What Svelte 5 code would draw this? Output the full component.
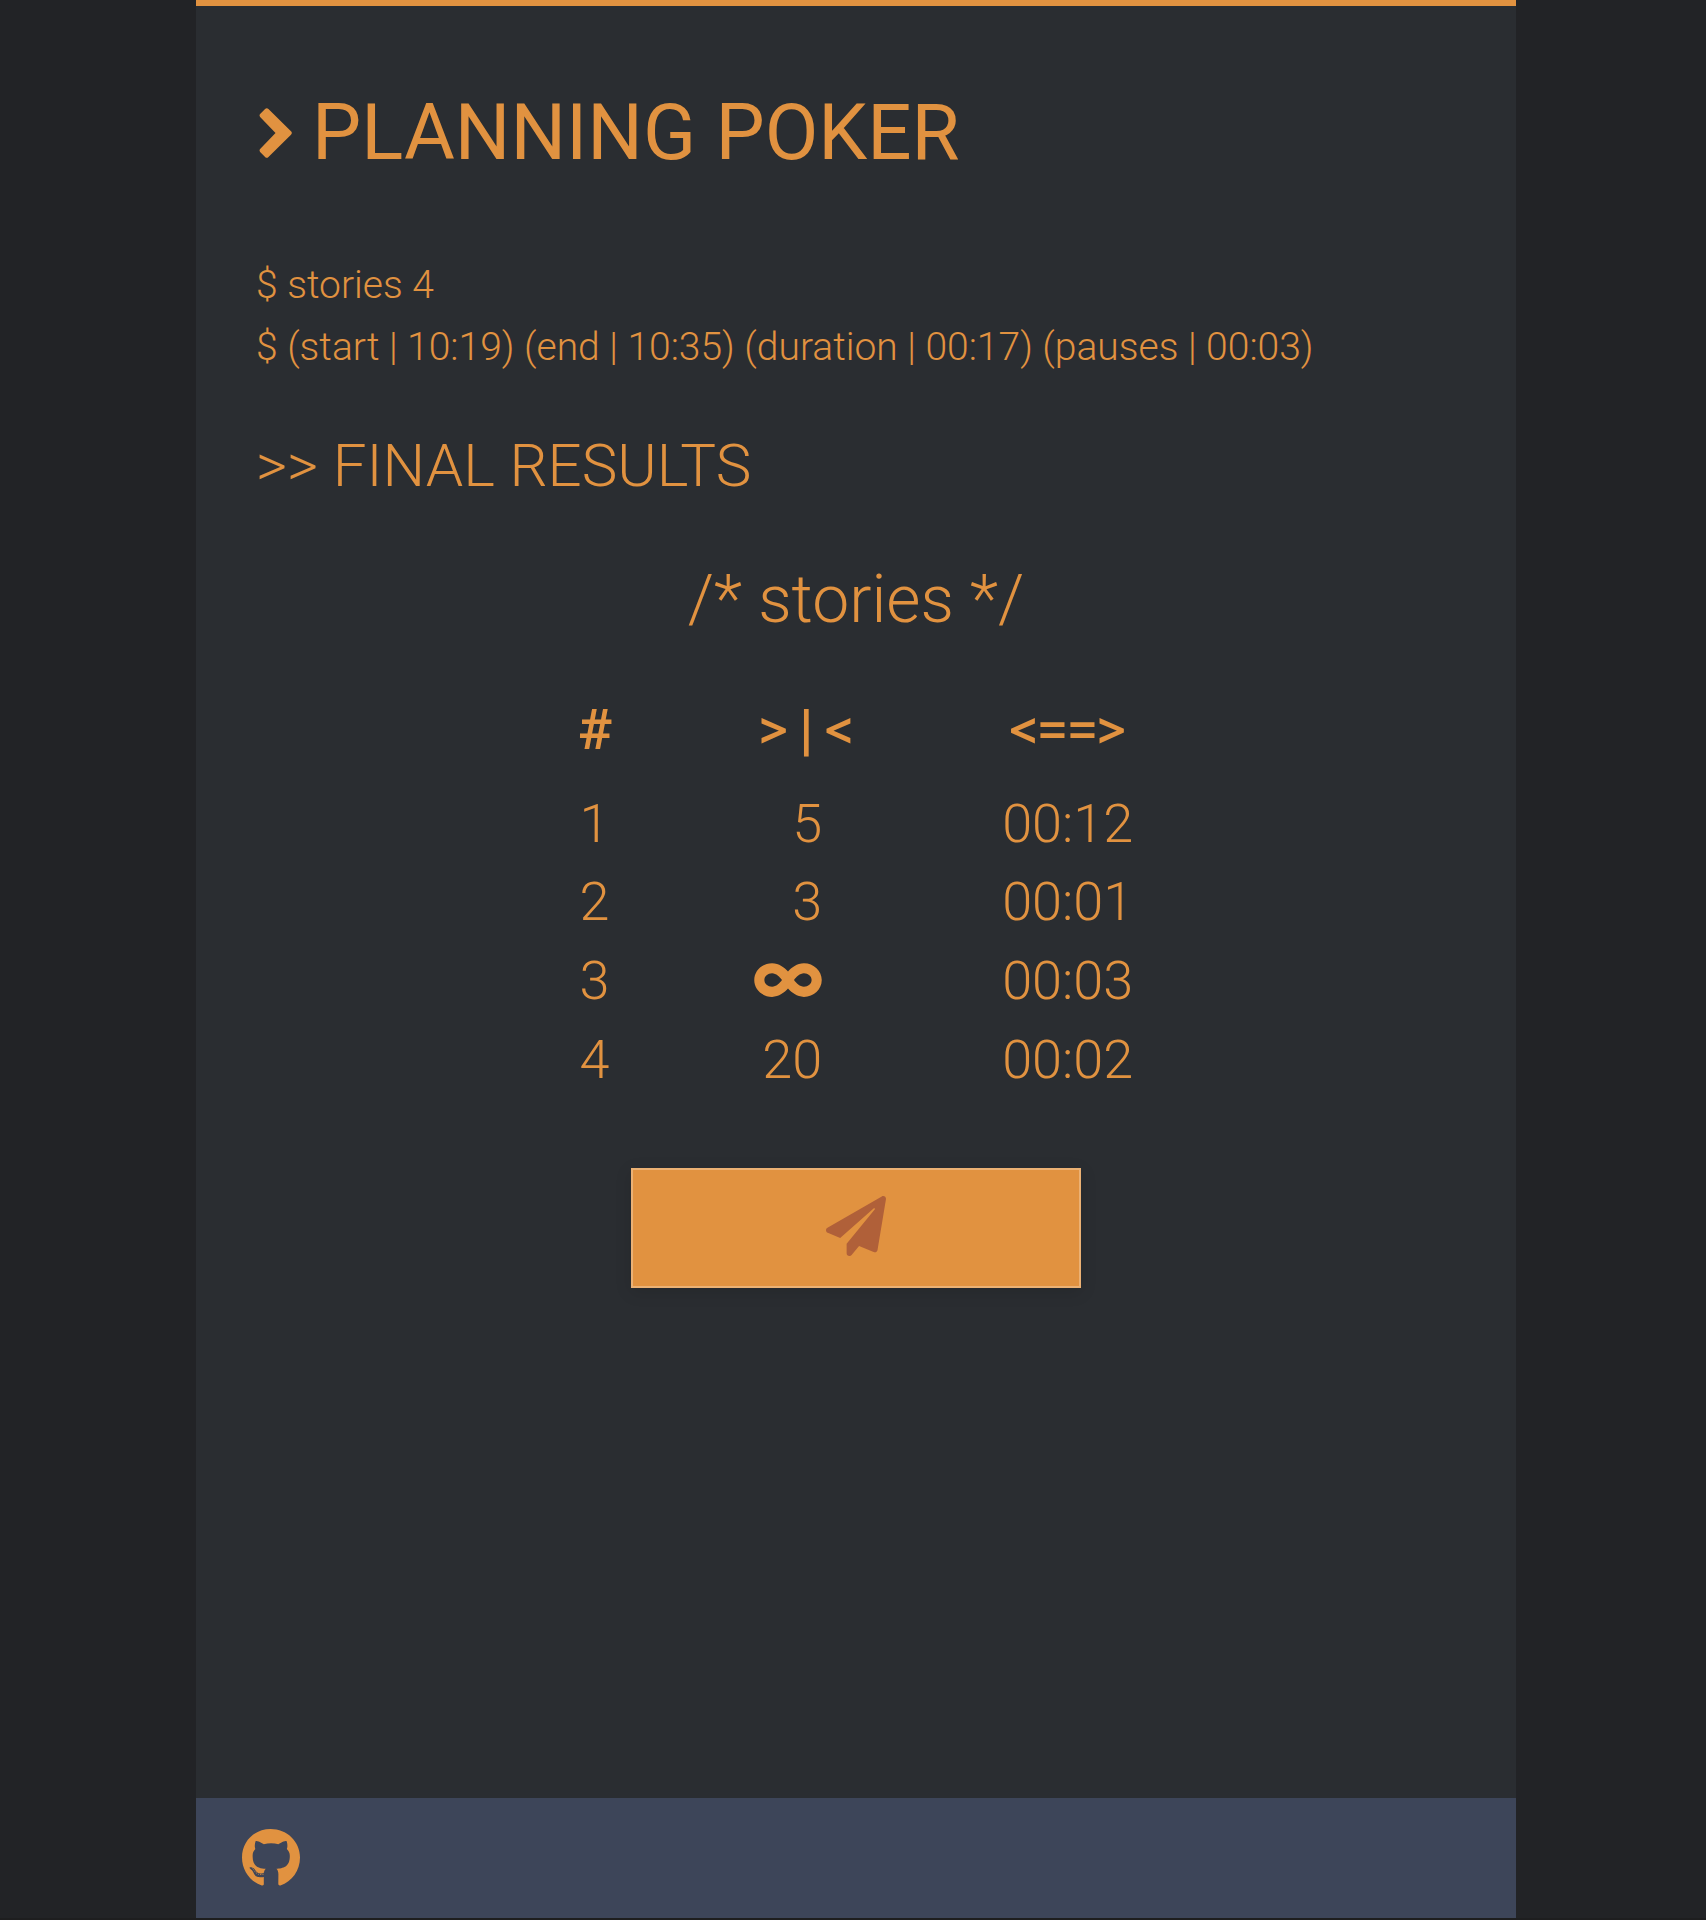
<script>
  const facts = [
    ['start', '10:19'],
    ['end', '10:35'],
    ['duration', '00:17'],
    ['pauses', '00:03'],
  ];
  const stories = [
    { id: 1, points: '5', time: '00:12' },
    { id: 2, points: '3', time: '00:01' },
    { id: 3, points: null, time: '00:03' },
    { id: 4, points: '20', time: '00:02' },
  ];
  const summary = facts.map(([name, value]) => `(${name} | ${value})`).join(' ');
</script>

<div class="shell">
  <div class="page">
    <main>
      <h1>
        <svg class="chevron" viewBox="-10 0 107 148" aria-hidden="true">
          <path d="M3 17L17 3Q22 -2 27 3L94 69Q99 74 94 79L27 145Q22 150 17 145L3 131Q-2 126 3 121L48 74 3 27Q-2 22 3 17z" />
        </svg>
        <span>PLANNING POKER</span>
      </h1>

      <div class="summary">
        <p>$ stories {stories.length}</p>
        <p>$ {summary}</p>
      </div>

      <h2>&gt;&gt; FINAL RESULTS</h2>

      <section>
        <h3>/* stories */</h3>
        <table>
          <thead>
            <tr>
              <th scope="col">#</th>
              <th scope="col">&gt; | &lt;</th>
              <th scope="col">&lt;==&gt;</th>
            </tr>
          </thead>
          <tbody>
            {#each stories as story (story.id)}
              <tr>
                <td>{story.id}</td>
                <td class="points">
                  {#if story.points}
                    {story.points}
                  {:else}
                    <svg class="infinity" viewBox="0 0 640 512" role="img" aria-label="infinity">
                      <path d="M471.1 96C405 96 353.3 137.3 320 174.6 286.7 137.3 235 96 168.9 96 75.8 96 0 167.8 0 256s75.8 160 168.9 160c66.1 0 117.8-41.3 151.1-78.6 33.3 37.3 85 78.6 151.1 78.6 93.1 0 168.9-71.8 168.9-160S564.2 96 471.1 96zM168.9 320c-40.2 0-72.9-28.7-72.9-64s32.7-64 72.9-64c38.2 0 73.4 36.1 94 64-20.4 27.6-55.9 64-94 64zm302.2 0c-38.2 0-73.4-36.1-94-64 20.4-27.6 55.9-64 94-64 40.2 0 72.9 28.7 72.9 64s-32.7 64-72.9 64z" />
                    </svg>
                  {/if}
                </td>
                <td>{story.time}</td>
              </tr>
            {/each}
          </tbody>
        </table>
        <button type="button" aria-label="Send results">
          <svg viewBox="0 0 512 512" aria-hidden="true">
            <path d="M476 3.2L12.5 270.6c-18.1 10.4-15.8 35.6 2.2 43.2L121 358.4l287.3-253.2c5.5-4.9 13.3 2.6 8.6 8.3L176 407v80.5c0 23.6 28.5 32.9 42.5 15.8L282 426l124.6 52.2c14.2 6 30.4-2.9 33-18.2l72-432C515 7.8 493.3-6.8 476 3.2z" />
          </svg>
        </button>
      </section>
    </main>

    <footer>
      <a href="#github" aria-label="GitHub">
        <svg viewBox="0 0 496 512" aria-hidden="true">
          <path d="M165.9 397.4c0 2-2.3 3.6-5.2 3.6-3.3.3-5.6-1.3-5.6-3.6 0-2 2.3-3.6 5.2-3.6 3-.3 5.6 1.3 5.6 3.6zm-31.1-4.5c-.7 2 1.3 4.3 4.3 4.9 2.6 1 5.6 0 6.2-2s-1.3-4.3-4.3-5.2c-2.6-.7-5.5.3-6.2 2.3zm44.2-1.7c-2.9.7-4.9 2.6-4.6 4.9.3 2 2.9 3.3 5.9 2.6 2.9-.7 4.9-2.6 4.6-4.6-.3-1.9-3-3.2-5.9-2.9zM244.8 8C106.1 8 0 113.3 0 252c0 110.9 69.8 205.8 169.5 239.2 12.8 2.3 17.3-5.6 17.3-12.1 0-6.2-.3-40.4-.3-61.4 0 0-70 15-84.7-29.8 0 0-11.4-29.1-27.8-36.6 0 0-22.9-15.7 1.6-15.4 0 0 24.9 2 38.6 25.8 21.9 38.6 58.6 27.5 72.9 20.9 2.3-16 8.8-27.1 16-33.7-55.9-6.2-112.3-14.3-112.3-110.5 0-27.5 7.6-41.3 23.6-58.9-2.6-6.5-11.1-33.3 2.6-67.9 20.9-6.5 69 27 69 27 20-5.6 41.5-8.5 62.8-8.5s42.8 2.9 62.8 8.5c0 0 48.1-33.6 69-27 13.7 34.7 5.2 61.4 2.6 67.9 16 17.7 25.8 31.5 25.8 58.9 0 96.5-58.9 104.2-114.8 110.5 9.2 7.9 17 22.9 17 46.4 0 33.7-.3 75.4-.3 83.6 0 6.5 4.6 14.4 17.3 12.1C428.2 457.8 496 362.9 496 252 496 113.3 383.5 8 244.8 8zM97.2 352.9c-1.3 1-1 3.3.7 5.2 1.6 1.6 3.9 2.3 5.2 1 1.3-1 1-3.3-.7-5.2-1.6-1.6-3.9-2.3-5.2-1zm-10.8-8.1c-.7 1.3.3 2.9 2.3 3.9 1.6 1 3.6.7 4.3-.7.7-1.3-.3-2.9-2.3-3.9-2-.6-3.6-.3-4.3.7zm32.4 35.6c-1.6 1.3-1 4.3 1.3 6.2 2.3 2.3 5.2 2.6 6.5 1 1.3-1.3.7-4.3-1.3-6.2-2.2-2.3-5.2-2.6-6.5-1zm-11.4-14.7c-1.6 1-1.6 3.6 0 5.9 1.6 2.3 4.3 3.3 5.6 2.3 1.6-1.3 1.6-3.9 0-6.2-1.4-2.3-4-3.3-5.6-2z" />
        </svg>
      </a>
    </footer>
  </div>
</div>

<style>
  :global(body) {
    background: #1e1e1f;
  }

  .shell {
    display: flex;
    justify-content: center;
    box-sizing: border-box;
    min-height: calc(100vh - 2px);
    padding-left: 6px;
    background: #222326;
  }

  .page {
    display: flex;
    flex: 1;
    flex-direction: column;
    box-sizing: border-box;
    max-width: 1320px;
    border-top: 6px solid #e19240;
    background: #2a2d31;
    color: #e19240;
    font-family: Roboto, "Helvetica Neue", Arial, sans-serif;
    font-size: 39px;
    font-weight: 300;
    line-height: 62px;
  }

  svg {
    display: block;
    fill: currentColor;
  }

  main {
    flex: 1;
    padding: 76px 60px 60px;
  }

  h1,
  h2,
  h3,
  p {
    margin: 0;
    font-weight: 300;
  }

  h1 {
    display: flex;
    align-items: center;
    gap: 20px;
    font-size: 78px;
    font-weight: 400;
    line-height: 102px;
  }

  .chevron {
    width: 36px;
    height: 50px;
  }

  .summary {
    margin-top: 70px;
  }

  h2 {
    margin-top: 52px;
    font-size: 60px;
    line-height: 72px;
  }

  section {
    display: flex;
    flex-direction: column;
    align-items: center;
    margin-top: 58px;
  }

  h3 {
    font-size: 66px;
    line-height: 80px;
  }

  table {
    margin-top: 51px;
    border-collapse: collapse;
    font-size: 54px;
    line-height: 78px;
  }

  th,
  td {
    padding: 0 72px;
    text-align: center;
  }

  th {
    padding-bottom: 16px;
    font-weight: 300;
    -webkit-text-stroke: 2px currentColor;
  }

  .points {
    padding-right: 108px;
    text-align: right;
  }

  .infinity {
    width: 68px;
    height: 54px;
    margin: 12px 0 14px auto;
  }

  button {
    display: flex;
    align-items: center;
    justify-content: center;
    width: 450px;
    max-width: 100%;
    height: 120px;
    margin-top: 69px;
    padding: 0 0 4px;
    border: 2px solid #ebb174;
    background: #e19240;
    color: #b06039;
    box-shadow: 0 4px 16px rgba(0, 0, 0, 0.12);
    cursor: pointer;
  }

  button svg {
    width: 60px;
    height: 60px;
  }

  footer {
    display: flex;
    align-items: center;
    height: 120px;
    padding: 0 46px;
    background: #3d4559;
  }

  footer a {
    color: inherit;
  }

  footer svg {
    width: 58px;
    height: 60px;
  }
</style>
